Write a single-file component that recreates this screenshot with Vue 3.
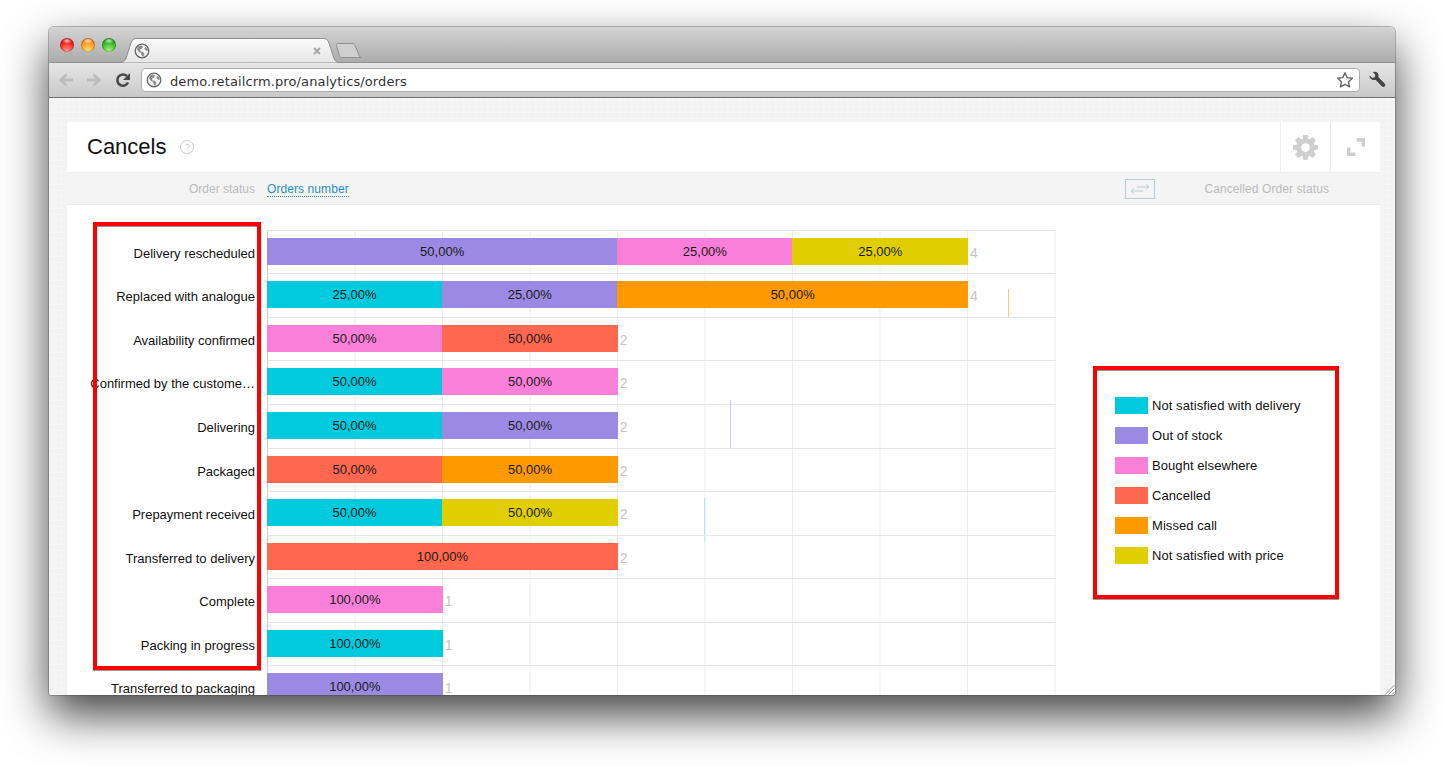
<template>
  <div class="browser">
    <div class="titlebar">
      <div class="lights">
        <span class="light red"></span>
        <span class="light amber"></span>
        <span class="light green"></span>
      </div>
      <div class="tab">
        <svg class="tab-shape" width="220" height="25" viewBox="0 0 220 25">
          <defs>
            <linearGradient id="tabFill" x1="0" y1="0" x2="0" y2="1">
              <stop offset="0" stop-color="#fbfbfb" />
              <stop offset="1" stop-color="#e6e6e6" />
            </linearGradient>
          </defs>
          <path
            d="M0 24.5C5 24.5 6.500 22 7.500 19L12 5C13 2 14.500 0.500 18 0.500H204C207.500 0.500 209 2 210 5L214.500 19C215.500 22 217 24.500 220 24.500"
            fill="url(#tabFill)"
            stroke="#8e8e8e"
          />
        </svg>
        <svg class="globe tab-globe" viewBox="0 0 16 16">
          <circle cx="8" cy="8" r="6.800" fill="#f4f4f4" stroke="#666" stroke-width="1.300" />
          <path d="M4 3.500l3-1 2 1-1 2-2 1 .5 2 2.500.5 1.500 2-1.500 3-1.500-2-.5-2-2-1-2-2.500z" fill="#8c8c8c" />
          <path d="M11 4l2 1 1 3-2-.5-1.500-1.500z" fill="#8c8c8c" />
        </svg>
        <svg class="tab-close" viewBox="0 0 8 8">
          <path d="M1 1l6 6M7 1l-6 6" stroke="#a8a8a8" stroke-width="2" />
        </svg>
      </div>
      <svg class="new-tab" width="27" height="17" viewBox="0 0 27 17">
        <path
          d="M2.500 1.500H17C18.500 1.500 19.500 2.200 20 3.500L24 13C24.500 14.500 25 15.500 26.500 15.500H7C5.500 15.500 5 15 4.500 14L1.500 3.500C1.200 2.300 1.500 1.500 2.500 1.500Z"
          fill="#cfcfcf"
          stroke="#8f8f8f"
        />
      </svg>
    </div>

    <div class="toolbar">
      <svg class="nav-icon" viewBox="0 0 16 16">
        <path d="M15 8H4M8.500 2.500L3 8l5.500 5.500" fill="none" stroke="#bdbdbd" stroke-width="3" />
      </svg>
      <svg class="nav-icon" viewBox="0 0 16 16">
        <path d="M1 8h11M7.500 2.500L13 8l-5.500 5.500" fill="none" stroke="#bdbdbd" stroke-width="3" />
      </svg>
      <svg class="nav-icon" viewBox="-1 0 16 16">
        <path d="M13 10.500A5.600 5.600 0 1 1 12 4.200" fill="none" stroke="#4a4a4a" stroke-width="2.600" />
        <path d="M15 1v7H8z" fill="#4a4a4a" />
      </svg>
      <div class="omnibox">
        <svg class="globe" viewBox="0 0 16 16">
          <circle cx="8" cy="8" r="6.800" fill="#f4f4f4" stroke="#666" stroke-width="1.300" />
          <path d="M4 3.500l3-1 2 1-1 2-2 1 .5 2 2.500.5 1.500 2-1.500 3-1.500-2-.5-2-2-1-2-2.500z" fill="#8c8c8c" />
          <path d="M11 4l2 1 1 3-2-.5-1.500-1.500z" fill="#8c8c8c" />
        </svg>
        <span class="url">demo.retailcrm.pro/analytics/orders</span>
        <svg class="star" viewBox="0 0 18 18">
          <path
            d="M9 1.800l2.200 4.800 5.200.6-3.900 3.500 1.100 5.200L9 13.300l-4.600 2.600 1.100-5.200L1.600 7.200l5.200-.6z"
            fill="#fff"
            stroke="#666"
            stroke-width="1.400"
            stroke-linejoin="round"
          />
        </svg>
      </div>
      <svg class="wrench" viewBox="0 0 18 18">
        <path
          d="M1.500 4.500L4.300 7 6.800 6.200 7.400 3.800 4.800 1.300C7 .3 9.500 1 10.300 3.200c.4 1 .3 2 0 2.800l6.300 6.400c.9.900.9 2 .2 2.900-.9.900-2.100.8-3-.1L7.500 8.800c-1 .3-2 .3-3-.1C2.300 7.800 1 6.500 1.500 4.500z"
          fill="#444"
        />
      </svg>
    </div>

    <div class="content">
      <section class="panel">
        <header class="panel-head">
          <h1 class="panel-title">Cancels</h1>
          <span class="help">?</span>
          <div class="head-cell first">
            <svg class="gear" viewBox="0 0 24 24">
              <g fill="#cfcfcf">
                <rect
                  v-for="angle in gearTeeth"
                  :key="angle"
                  x="9.500"
                  y="0"
                  width="5"
                  height="24"
                  rx="1"
                  :transform="`rotate(${angle} 12 12)`"
                />
              </g>
              <circle cx="12" cy="12" r="6.500" fill="none" stroke="#cfcfcf" stroke-width="5" />
              <circle cx="12" cy="12" r="4.200" fill="#fff" />
            </svg>
          </div>
          <div class="head-cell">
            <svg class="expand" viewBox="0 0 18 18">
              <path d="M9.500 0h8a.5.500 0 0 1 .5.500V8.500h-3.500V3.500h-5zM0 9.500h3.500v5h5V18H.5a.5.500 0 0 1-.5-.5z" fill="#cfcfcf" />
            </svg>
          </div>
        </header>

        <div class="filters">
          <span class="filter-label">Order status</span>
          <a class="filter-link">Orders number</a>
          <span class="swap">
            <svg width="22" height="12" viewBox="0 0 22 12">
              <path d="M8 4h12M17 1.500L20 4l-3 2.500M14 8H2M5 5.500L2 8l3 2.500" fill="none" stroke="#b9cdd6" />
            </svg>
          </span>
          <span class="filter-label-right">Cancelled Order status</span>
        </div>

        <div class="chart">
          <div class="rows">
            <div v-for="row in rows" :key="row.label" class="row">
              <div class="row-label">{{ row.label }}</div>
              <div class="row-plot">
                <div
                  v-for="(seg, i) in row.segments"
                  :key="i"
                  class="segment"
                  :style="{ width: segWidth(row, i), background: colors[seg.color] }"
                >
                  {{ percent(seg.value, row) }}
                </div>
                <span class="count">{{ total(row) }}</span>
                <i v-if="row.tick" class="tick" :style="row.tick"></i>
              </div>
            </div>
          </div>

          <ul class="legend">
            <li v-for="item in legend" :key="item.label" class="legend-item">
              <span class="swatch" :style="{ background: colors[item.color] }"></span>
              {{ item.label }}
            </li>
          </ul>

          <div class="label-mark"></div>
        </div>
      </section>

      <svg class="grip" width="11" height="11" viewBox="0 0 11 11">
        <path d="M1 10.500L10.500 1M4.500 10.500L10.500 4.500M8 10.500L10.500 8" stroke="#999" fill="none" />
      </svg>
    </div>
  </div>
</template>

<script setup>
const unit = 175.15

const colors = {
  cyan: '#00cadd',
  purple: '#9a8ae3',
  pink: '#fa7fd9',
  coral: '#ff684e',
  orange: '#ff9900',
  yellow: '#e0ce00'
}

const gearTeeth = [0, 45, 90, 135]

const legend = [
  { label: 'Not satisfied with delivery', color: 'cyan' },
  { label: 'Out of stock', color: 'purple' },
  { label: 'Bought elsewhere', color: 'pink' },
  { label: 'Cancelled', color: 'coral' },
  { label: 'Missed call', color: 'orange' },
  { label: 'Not satisfied with price', color: 'yellow' }
]

const rows = [
  {
    label: 'Delivery rescheduled',
    segments: [
      { color: 'purple', value: 2 },
      { color: 'pink', value: 1 },
      { color: 'yellow', value: 1 }
    ]
  },
  {
    label: 'Replaced with analogue',
    segments: [
      { color: 'cyan', value: 1 },
      { color: 'purple', value: 1 },
      { color: 'orange', value: 2 }
    ],
    tick: { left: '741px', top: '15px', height: '29px', background: '#ffc877' }
  },
  {
    label: 'Availability confirmed',
    segments: [
      { color: 'pink', value: 1 },
      { color: 'coral', value: 1 }
    ]
  },
  {
    label: 'Confirmed by the custome…',
    segments: [
      { color: 'cyan', value: 1 },
      { color: 'pink', value: 1 }
    ]
  },
  {
    label: 'Delivering',
    segments: [
      { color: 'cyan', value: 1 },
      { color: 'purple', value: 1 }
    ],
    tick: { left: '463px', top: '-5px', height: '49px', background: '#cfc8f2' }
  },
  {
    label: 'Packaged',
    segments: [
      { color: 'coral', value: 1 },
      { color: 'orange', value: 1 }
    ]
  },
  {
    label: 'Prepayment received',
    segments: [
      { color: 'cyan', value: 1 },
      { color: 'yellow', value: 1 }
    ],
    tick: { left: '437px', top: '6px', height: '45px', background: '#a5e8ef' }
  },
  { label: 'Transferred to delivery', segments: [{ color: 'coral', value: 2 }] },
  { label: 'Complete', segments: [{ color: 'pink', value: 1 }] },
  { label: 'Packing in progress', segments: [{ color: 'cyan', value: 1 }] },
  { label: 'Transferred to packaging', segments: [{ color: 'purple', value: 1 }] }
]

function total(row) {
  return row.segments.reduce((sum, seg) => sum + seg.value, 0)
}

function percent(value, row) {
  return ((value / total(row)) * 100).toFixed(2).replace('.', ',') + '%'
}

function segWidth(row, i) {
  const extra = i === row.segments.length - 1 ? 0.5 : 0
  return row.segments[i].value * unit + extra + 'px'
}
</script>

<style>
html,
body {
  margin: 0;
  background: #fff;
  overflow: hidden;
}
</style>

<style scoped>
.browser {
  width: 1346px;
  height: 668px;
  margin: 27px 49px 71px;
  border-radius: 5px 5px 3px 3px;
  overflow: hidden;
  display: flex;
  flex-direction: column;
  font-family: 'Liberation Sans', Arial, sans-serif;
  font-size: 13px;
  color: #111;
  box-shadow:
    0 0 0 1px rgba(70, 70, 70, 0.35),
    0 20px 45px rgba(0, 0, 0, 0.75);
  position: relative;
}

.titlebar {
  height: 36px;
  box-sizing: border-box;
  display: flex;
  align-items: flex-end;
  padding-left: 11px;
  background: linear-gradient(#d4d4d4, #acacac);
  border-bottom: 1px solid #909090;
  flex: none;
}

.lights {
  display: flex;
  gap: 7px;
  align-self: flex-start;
  margin-top: 11px;
}

.light {
  width: 14px;
  height: 14px;
  border-radius: 50%;
  box-shadow: inset 0 0 0 1px rgba(0, 0, 0, 0.2);
}

.light.red {
  background:
    radial-gradient(ellipse 5px 3px at 50% 20%, rgba(255, 255, 255, 0.75), transparent),
    radial-gradient(circle at 50% 90%, #ff9a90, #f21c14 60%, #b5100c);
}

.light.amber {
  background:
    radial-gradient(ellipse 5px 3px at 50% 20%, rgba(255, 255, 255, 0.75), transparent),
    radial-gradient(circle at 50% 90%, #ffe27a, #fb9318 60%, #c96408);
}

.light.green {
  background:
    radial-gradient(ellipse 5px 3px at 50% 20%, rgba(255, 255, 255, 0.75), transparent),
    radial-gradient(circle at 50% 90%, #b2f27e, #29b420 60%, #0d7a0a);
}

.tab {
  position: relative;
  width: 220px;
  height: 25px;
  margin-left: 3px;
  margin-bottom: -1px;
  flex: none;
}

.tab-shape {
  position: absolute;
  inset: 0;
}

.globe {
  width: 16px;
  height: 16px;
  flex: none;
}

.tab-globe {
  position: absolute;
  left: 15px;
  top: 5px;
}

.tab-close {
  position: absolute;
  left: 194px;
  top: 9px;
  width: 8px;
  height: 8px;
}

.new-tab {
  margin-left: -4px;
  margin-bottom: 3px;
  flex: none;
}

.toolbar {
  height: 35px;
  box-sizing: border-box;
  display: flex;
  align-items: center;
  padding: 0 9px 0 9px;
  background: linear-gradient(#e6e6e6, #c9c9c9);
  border-bottom: 1px solid #6f6f6f;
  flex: none;
}

.nav-icon {
  width: 16px;
  height: 16px;
  margin-right: 12px;
  flex: none;
}

.omnibox {
  height: 24px;
  width: 1219px;
  box-sizing: border-box;
  margin-left: -1px;
  margin-right: 8px;
  padding: 0 5px 0 4px;
  display: flex;
  align-items: center;
  background: #fff;
  border: 1px solid #adadad;
  border-radius: 4px;
  flex: none;
}

.url {
  margin: 2px 0 0 8px;
  font-family: 'DejaVu Sans', sans-serif;
  font-size: 13px;
  letter-spacing: 0.12px;
  color: #333;
  flex: 1;
}

.star {
  width: 18px;
  height: 18px;
}

.wrench {
  width: 18px;
  height: 18px;
  flex: none;
}

.content {
  flex: 1;
  min-height: 0;
  padding: 24px 15px 0 18px;
  background-color: #f3f3f3;
  background-image:
    repeating-linear-gradient(0deg, rgba(255, 255, 255, 0.25) 0 1px, transparent 1px 6px),
    repeating-linear-gradient(90deg, rgba(255, 255, 255, 0.25) 0 1px, transparent 1px 6px);
}

.panel {
  background: #fff;
  border-radius: 3px 3px 0 0;
}

.panel-head {
  height: 51px;
  box-sizing: border-box;
  display: flex;
  align-items: center;
  padding-left: 20px;
  border-bottom: 1px solid #efefef;
}

.panel-title {
  margin: 0;
  font-size: 22px;
  font-weight: 400;
  color: #111;
  line-height: 1;
}

.help {
  width: 12px;
  height: 12px;
  margin-left: 14px;
  margin-right: auto;
  border: 1px solid #cfcfcf;
  border-radius: 50%;
  color: #c4c4c4;
  font-size: 9px;
  line-height: 12px;
  text-align: center;
}

.head-cell {
  width: 49px;
  height: 100%;
  display: flex;
  align-items: center;
  justify-content: center;
  border-left: 1px solid #efefef;
}

.gear {
  width: 25px;
  height: 25px;
}

.expand {
  width: 18px;
  height: 18px;
}

.filters {
  height: 32px;
  box-sizing: border-box;
  display: flex;
  align-items: center;
  padding: 1px 51px 0 0;
  background: #f4f4f4;
  border-bottom: 1px solid #ececec;
  font-size: 12px;
}

.filter-label {
  width: 188px;
  text-align: right;
  color: #bbb;
}

.filter-link {
  margin-left: 12px;
  color: #2a8fc2;
  border-bottom: 1px dotted #2a8fc2;
  line-height: 14px;
  letter-spacing: 0.08px;
}

.swap {
  width: 30px;
  height: 20px;
  box-sizing: border-box;
  margin: -1px 0 0 auto;
  display: flex;
  align-items: center;
  justify-content: center;
  border: 1px solid #b9cdd6;
}

.filter-label-right {
  margin-left: 50px;
  color: #bbb;
  letter-spacing: 0.08px;
}

.chart {
  position: relative;
  display: flex;
  align-items: flex-start;
  padding-top: 24.8px;
  height: 500px;
  overflow: hidden;
}

.row {
  display: flex;
}

.row-label {
  width: 188px;
  margin-right: 12px;
  padding-top: 16px;
  line-height: 16px;
  text-align: right;
  white-space: nowrap;
  color: #111;
}

.row-plot {
  position: relative;
  width: 789px;
  height: 43.55px;
  box-sizing: border-box;
  padding-top: 7px;
  display: flex;
  align-items: flex-start;
  border-top: 1px solid #e6e6e6;
  background-image:
    linear-gradient(#c9c9c9, #c9c9c9),
    linear-gradient(90deg, #ededed 1px, transparent 1px);
  background-size: 1px 100%, 87.5px 100%;
  background-repeat: no-repeat, repeat-x;
}

.segment {
  height: 27px;
  line-height: 27px;
  text-align: center;
  color: #1a1a1a;
  flex: none;
}

.count {
  margin: 9px 0 0 2px;
  font-size: 14px;
  line-height: 12px;
  color: #c6c6c6;
}

.tick {
  position: absolute;
  width: 1px;
}

.legend {
  list-style: none;
  box-sizing: border-box;
  width: 246px;
  height: 233px;
  margin: 136px 0 0 37px;
  padding: 27px 0 0 18px;
  border: 4px solid #f00;
  background: #fff;
  box-shadow: 0 1px 0 #999, inset 0 1px 0 #999;
}

.legend-item {
  height: 30px;
  display: flex;
  align-items: flex-start;
  gap: 4px;
  line-height: 18px;
  letter-spacing: 0.07px;
}

.swatch {
  width: 33px;
  height: 17px;
  flex: none;
}

.label-mark {
  position: absolute;
  left: 26px;
  top: 17px;
  width: 168px;
  height: 448px;
  box-sizing: border-box;
  border: 4px solid #f00;
  box-shadow: 0 1px 0 #999, inset 0 1px 0 #999;
  pointer-events: none;
}

.grip {
  position: absolute;
  right: 0;
  bottom: 0;
}
</style>
